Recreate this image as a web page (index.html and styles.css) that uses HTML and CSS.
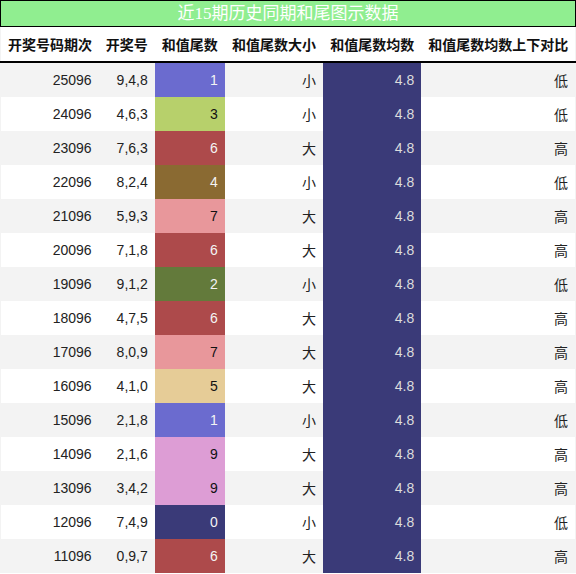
FILE: index.html
```html
<!DOCTYPE html>
<html>
<head>
<meta charset="utf-8">
<link rel="stylesheet" href="styles.css">
</head>
<body>
<div class="wrap">
  <div class="title">近15期历史同期和尾图示数据</div>
  <table class="grid">
    <colgroup>
      <col class="c1"><col class="c2"><col class="c3"><col class="c4"><col class="c5"><col class="c6">
    </colgroup>
    <thead>
      <tr><th>开奖号码期次</th><th>开奖号</th><th>和值尾数</th><th>和值尾数大小</th><th>和值尾数均数</th><th>和值尾数均数上下对比</th></tr>
    </thead>
    <tbody>
      <tr><td>25096</td><td>9,4,8</td><td class="v v1">1</td><td>小</td><td class="avg">4.8</td><td>低</td></tr>
      <tr><td>24096</td><td>4,6,3</td><td class="v v3">3</td><td>小</td><td class="avg">4.8</td><td>低</td></tr>
      <tr><td>23096</td><td>7,6,3</td><td class="v v6">6</td><td>大</td><td class="avg">4.8</td><td>高</td></tr>
      <tr><td>22096</td><td>8,2,4</td><td class="v v4">4</td><td>小</td><td class="avg">4.8</td><td>低</td></tr>
      <tr><td>21096</td><td>5,9,3</td><td class="v v7">7</td><td>大</td><td class="avg">4.8</td><td>高</td></tr>
      <tr><td>20096</td><td>7,1,8</td><td class="v v6">6</td><td>大</td><td class="avg">4.8</td><td>高</td></tr>
      <tr><td>19096</td><td>9,1,2</td><td class="v v2">2</td><td>小</td><td class="avg">4.8</td><td>低</td></tr>
      <tr><td>18096</td><td>4,7,5</td><td class="v v6">6</td><td>大</td><td class="avg">4.8</td><td>高</td></tr>
      <tr><td>17096</td><td>8,0,9</td><td class="v v7">7</td><td>大</td><td class="avg">4.8</td><td>高</td></tr>
      <tr><td>16096</td><td>4,1,0</td><td class="v v5">5</td><td>大</td><td class="avg">4.8</td><td>高</td></tr>
      <tr><td>15096</td><td>2,1,8</td><td class="v v1">1</td><td>小</td><td class="avg">4.8</td><td>低</td></tr>
      <tr><td>14096</td><td>2,1,6</td><td class="v v9">9</td><td>大</td><td class="avg">4.8</td><td>高</td></tr>
      <tr><td>13096</td><td>3,4,2</td><td class="v v9">9</td><td>大</td><td class="avg">4.8</td><td>高</td></tr>
      <tr><td>12096</td><td>7,4,9</td><td class="v v0">0</td><td>小</td><td class="avg">4.8</td><td>低</td></tr>
      <tr><td>11096</td><td>0,9,7</td><td class="v v6">6</td><td>大</td><td class="avg">4.8</td><td>高</td></tr>
    </tbody>
  </table>
</div>
</body>
</html>
```
FILE: styles.css
```css
html, body {
  margin: 0;
  padding: 0;
  background: #ffffff;
}
.wrap {
  width: 576px;
}
.title {
  box-sizing: border-box;
  height: 27px;
  border: 1px solid #000;
  background: #90ee90;
  color: #ffffff;
  font-family: "Liberation Serif", "Noto Sans CJK SC", serif;
  font-size: 17px;
  line-height: 25px;
  text-align: center;
}
.grid {
  width: 576px;
  border-collapse: collapse;
  table-layout: fixed;
  border-left: 1px solid #f3f3f3;
  border-right: 1px solid #f3f3f3;
  font-family: "Liberation Sans", "Noto Sans CJK SC", sans-serif;
  font-size: 14px;
  color: #222;
}
.c1 { width: 98px; }
.c2 { width: 56px; }
.c3 { width: 70px; }
.c4 { width: 98px; }
.c5 { width: 98px; }
.c6 { width: 154px; }
.grid th {
  height: 34px;
  padding: 0 7px;
  font-weight: bold;
  color: #111;
  text-align: right;
  white-space: nowrap;
  border-bottom: 2px solid #000;
  background: #fff;
}
.grid td {
  height: 34px;
  padding: 0 7px;
  text-align: right;
  white-space: nowrap;
}
.grid tbody tr:nth-child(odd) { background: #f3f3f3; }
.grid tbody tr:nth-child(even) { background: #ffffff; }
.v { color: #f4f4f4; }
.v1 { background: #6b6bcf; }
.v3 { background: #b7d06b; color: #111; }
.v6 { background: #ad4a4b; }
.v4 { background: #8a6a32; }
.v7 { background: #e8979b; color: #111; }
.v2 { background: #637a3b; }
.v5 { background: #e6cc97; color: #111; }
.v9 { background: #dd9dd5; color: #111; }
.v0 { background: #3a3a78; }
.avg {
  background: #3a3a78;
  color: #dcdcdc;
}
```
